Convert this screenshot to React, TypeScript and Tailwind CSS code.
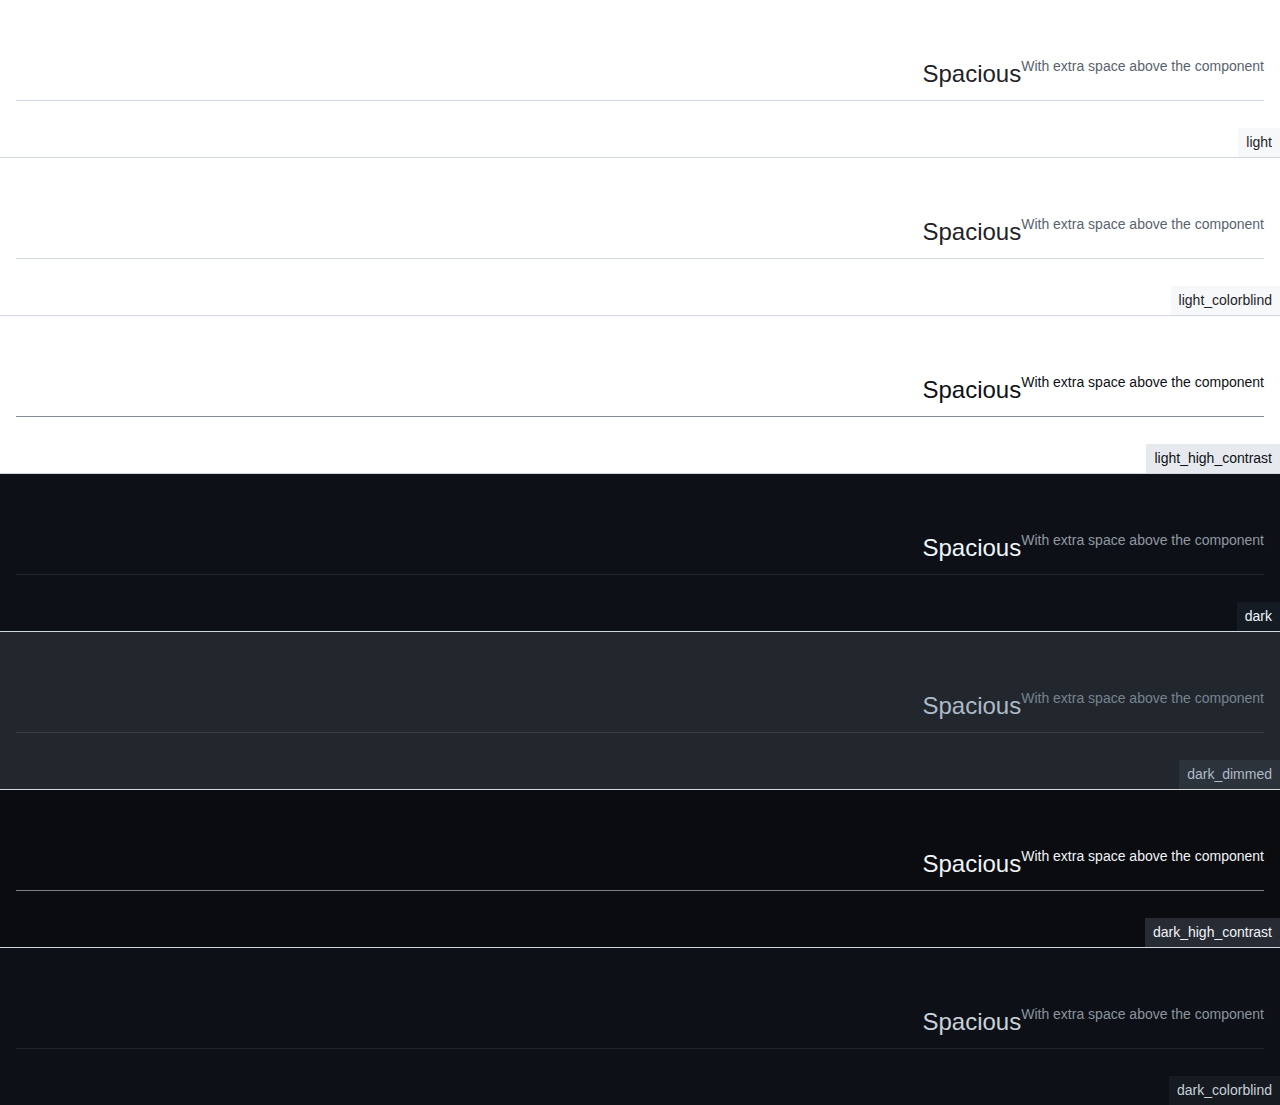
const themes = [
  {
    name: "light",
    panel: "bg-white",
    heading: "text-[#1f2328]",
    desc: "text-[#59636e]",
    line: "border-[#d1d9e0]",
    label: "bg-[#f6f8fa] text-[#1f2328]",
  },
  {
    name: "light_colorblind",
    panel: "bg-white",
    heading: "text-[#1f2328]",
    desc: "text-[#59636e]",
    line: "border-[#d1d9e0]",
    label: "bg-[#f6f8fa] text-[#1f2328]",
  },
  {
    name: "light_high_contrast",
    panel: "bg-white",
    heading: "text-[#0e1116]",
    desc: "text-[#0e1116]",
    line: "border-[#818b98]",
    label: "bg-[#e6eaef] text-[#0e1116]",
  },
  {
    name: "dark",
    panel: "bg-[#0d1117]",
    heading: "text-[#f0f6fc]",
    desc: "text-[#9198a1]",
    line: "border-[#21262d]",
    label: "bg-[#151b23] text-[#f0f6fc]",
  },
  {
    name: "dark_dimmed",
    panel: "bg-[#22272e]",
    heading: "text-[#adbac7]",
    desc: "text-[#768390]",
    line: "border-[#373e47]",
    label: "bg-[#2d333b] text-[#adbac7]",
  },
  {
    name: "dark_high_contrast",
    panel: "bg-[#0a0c10]",
    heading: "text-[#f0f3f6]",
    desc: "text-[#f0f3f6]",
    line: "border-[#7a828e]",
    label: "bg-[#272b33] text-[#f0f3f6]",
  },
  {
    name: "dark_colorblind",
    panel: "bg-[#0d1117]",
    heading: "text-[#c9d1d9]",
    desc: "text-[#8b949e]",
    line: "border-[#21262d]",
    label: "bg-[#161b22] text-[#c9d1d9]",
  },
];

type Theme = (typeof themes)[number];

function Panel({ theme }: { theme: Theme }) {
  return (
    <div
      className={`relative h-[158px] shrink-0 border-b border-[#d0d7de] p-4 ${theme.panel}`}
    >
      {/* Subhead */}
      <div
        className={`mt-10 flex flex-row flex-wrap items-start justify-end border-b pb-2 ${theme.line}`}
      >
        <h2 className={`text-[24px] font-normal leading-[36px] ${theme.heading}`}>
          Spacious
        </h2>
        <div className={`text-[14px] leading-[21px] ${theme.desc}`}>
          With extra space above the component
        </div>
      </div>

      {/* Theme label */}
      <div
        className={`absolute bottom-0 right-0 px-2 py-1 text-[14px] leading-[21px] ${theme.label}`}
      >
        {theme.name}
      </div>
    </div>
  );
}

export default function App() {
  return (
    <div
      className="flex h-[1105px] flex-col overflow-hidden"
      style={{ fontFamily: '"Liberation Sans", Arial, sans-serif' }}
    >
      {themes.map((t) => (
        <Panel key={t.name} theme={t} />
      ))}
    </div>
  );
}
